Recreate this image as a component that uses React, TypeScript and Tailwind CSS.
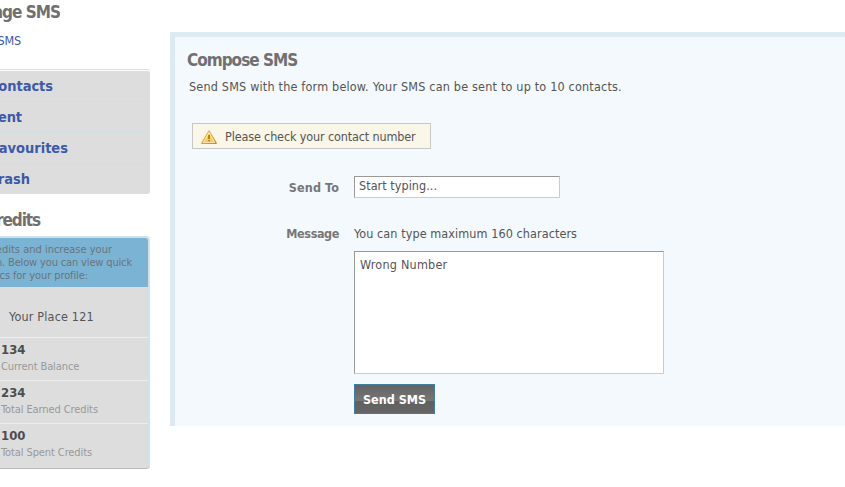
import type { ReactNode } from "react";

const folders = [
  { label: "Contacts", row: "h-[31px]", text: "w-[53px] tracking-[-0.05px]" },
  { label: "Sent", row: "h-[31px]", text: "w-[22px] tracking-[-0.1px]" },
  { label: "Favourites", row: "h-[31px]", text: "w-[68px] tracking-[0px]" },
  { label: "Trash", row: "h-[30px]", text: "w-[30px] tracking-[0px]" },
];

const stats = [
  { value: "134", label: "Current Balance" },
  { value: "234", label: "Total Earned Credits" },
  { value: "100", label: "Total Spent Credits" },
];

function Clipped({ className, children }: { className: string; children: ReactNode }) {
  return <div className={`flex justify-end overflow-hidden whitespace-nowrap ${className}`}>{children}</div>;
}

function Warning() {
  return (
    <svg width="16" height="14" viewBox="0 0 16 14" className="mt-px block shrink-0">
      <defs>
        <linearGradient id="amber" x1="0" y1="0" x2="1" y2="1">
          <stop offset="0" stopColor="#f3c565" />
          <stop offset="1" stopColor="#cf8420" />
        </linearGradient>
      </defs>
      <path d="M8 .7 L15.3 13.3 H.7 Z" fill="#fff8dc" stroke="url(#amber)" strokeWidth="1.2" strokeLinejoin="round" />
      <path d="M8 3.2 L13.2 12 H2.8 Z" fill="#f5d050" />
      <path d="M7.2 5h1.7v4H7.2zM7.2 10h1.7v1.3H7.2z" fill="#a87420" />
    </svg>
  );
}

export default function App() {
  return (
    <div className="flex h-[487px] w-[845px] overflow-hidden bg-white font-['DejaVu_Sans_Condensed','DejaVu_Sans',sans-serif] text-[12.5px] leading-[16px] text-[#555]">
      <aside className="w-[150px] shrink-0">
        <Clipped className="mt-[2px] h-[20px] w-[60px] text-[17px] font-bold leading-[20px] tracking-[-1px] text-[#707070]">Manage SMS</Clipped>
        <Clipped className="mt-[11px] w-[21px] tracking-[-0.2px] text-[#3a5aa8]">New SMS</Clipped>
        <nav className="mt-[20px] h-[125px] rounded-r-[3px] border-t border-[#cfe3e9] bg-[#ddd] pt-px shadow-[inset_0_1px_0_#fff]">
          {folders.map((f, i) => (
            <div key={f.label} className={`flex items-center ${f.row} ${i < 3 ? "border-b border-[#d0dfe5]" : ""}`}>
              <Clipped className={`text-[14.5px] font-bold leading-[20px] text-[#3c5aa9] ${f.text}`}>{f.label}</Clipped>
            </div>
          ))}
        </nav>
        <Clipped className="mt-[16px] h-[20px] w-[41px] text-[17px] font-bold leading-[20px] tracking-[-1.1px] text-[#707070]"><span className="pr-px">Credits</span></Clipped>
        <section className="mt-[6px] h-[233px] rounded-r-[4px] border-b border-[#bbb] bg-[#d0e2e9] pr-[2px] pt-[2px]">
          <div className="h-[49px] rounded-tr-[3px] bg-[#7bb3d4] pt-[5px] text-[11px] leading-[13px] text-[#6b7378]">
            <Clipped className="w-[112px] tracking-[0px]">credits and increase your</Clipped>
            <Clipped className="w-[132px] tracking-[-0.15px]">position. Below you can view quick</Clipped>
            <Clipped className="w-[88px] tracking-[-0.1px]">statistics for your profile:</Clipped>
          </div>
          <div className="h-[50px] bg-[#ddd] pl-[9px] pt-[22px] tracking-[0.18px]">Your Place 121</div>
          {stats.map((s) => (
            <div key={s.label} className="h-[43px] border-t border-[#eee] bg-[#ddd] pl-px pt-[4px]">
              <div className="text-[13px] font-bold leading-[16px] text-[#4d4d4d]">{s.value}</div>
              <div className="mt-[2px] whitespace-nowrap text-[11px] leading-[14px] tracking-[-0.1px] text-[#999]">{s.label}</div>
            </div>
          ))}
          <div className="h-px bg-[#ddd]" />
        </section>
      </aside>
      <main className="ml-[20px] mt-[32px] h-[394px] flex-1 border-l-[5px] border-t-[5px] border-[#dcebf2] bg-[#f3f9fc]">
        <h1 className="ml-[12px] mt-[13px] text-[17px] font-bold leading-[20px] tracking-[-1px] text-[#707070]">Compose SMS</h1>
        <p className="ml-[14px] mt-[9px] whitespace-nowrap tracking-[0.19px]">Send SMS with the form below. Your SMS can be sent to up to 10 contacts.</p>
        <div className="ml-[17px] mt-[28px] flex h-[26px] w-[239px] items-center border border-[#c8c8c8] bg-[#faf6e8] pl-[8px]">
          <Warning />
          <span className="ml-[8px] mt-px whitespace-nowrap tracking-[-0.14px]">Please check your contact number</span>
        </div>
        <form className="mt-[27px]" onSubmit={(e) => e.preventDefault()}>
          <div className="flex">
            <label className="mt-[4px] w-[164px] text-right font-bold tracking-[0.1px] text-[#777]">Send To</label>
            <div className="ml-[15px] h-[22px] w-[206px] border border-[#ccc] border-l-[#999] border-t-[#999] bg-white pl-[4px] pt-px tracking-[0.05px]">Start typing...</div>
          </div>
          <div className="mt-[28px] flex">
            <label className="w-[164px] text-right font-bold tracking-[-0.4px] text-[#777]">Message</label>
            <div className="ml-[15px]">
              <p className="whitespace-nowrap tracking-[0.08px]">You can type maximum 160 characters</p>
              <div className="mt-[9px] h-[123px] w-[310px] border border-[#ccc] border-l-[#999] border-t-[#999] bg-white pl-[5px] pt-[5px] tracking-[0.22px]">Wrong Number</div>
              <button className="mt-[10px] block h-[30px] w-[81px] whitespace-nowrap border border-[#427e9c] bg-[linear-gradient(#626262_0,#777_56%,#606060_56%,#666_100%)] pt-px font-bold text-white">Send SMS</button>
            </div>
          </div>
        </form>
      </main>
    </div>
  );
}
